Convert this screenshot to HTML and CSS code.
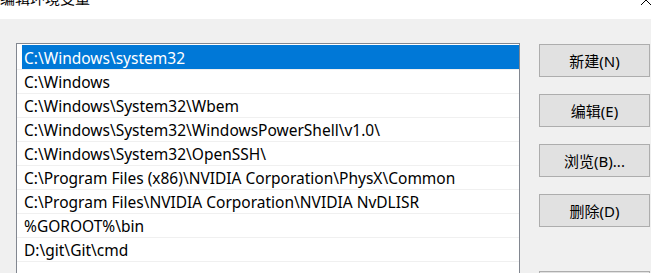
FILE: index.html
```html
<!DOCTYPE html>
<html lang="zh-CN">
  <head>
    <meta charset="UTF-8" />
    <meta name="viewport" content="width=device-width, initial-scale=1.0" />
    <title>编辑环境变量</title>
    <link rel="stylesheet" href="styles.css">
  </head>
  <body>
    <div class="titlebar">
      <span class="title">编辑环境变量</span>
      <svg class="close-icon" width="12" height="12" viewBox="0 0 12 12">
        <path d="M1 1 L11 11 M11 1 L1 11" stroke="#000" stroke-width="1" fill="none" />
      </svg>
    </div>

    <div class="dialog">
      <div class="path-list">
        <div class="row selected"><span>C:\Windows\system32</span></div>
        <div class="row"><span>C:\Windows</span></div>
        <div class="row"><span>C:\Windows\System32\Wbem</span></div>
        <div class="row"><span>C:\Windows\System32\WindowsPowerShell\v1.0\</span></div>
        <div class="row"><span>C:\Windows\System32\OpenSSH\</span></div>
        <div class="row"><span>C:\Program Files (x86)\NVIDIA Corporation\PhysX\Common</span></div>
        <div class="row"><span>C:\Program Files\NVIDIA Corporation\NVIDIA NvDLISR</span></div>
        <div class="row"><span>%GOROOT%\bin</span></div>
        <div class="row"><span>D:\git\Git\cmd</span></div>
        <div class="row"><span></span></div>
      </div>

      <div class="button-column">
        <button type="button" class="btn">新建(N)</button>
        <button type="button" class="btn">编辑(E)</button>
        <button type="button" class="btn">浏览(B)...</button>
        <button type="button" class="btn">删除(D)</button>
        <button type="button" class="btn group-start">上移(U)</button>
      </div>
    </div>
  </body>
</html>
```

FILE: styles.css
```css
html,
body {
  margin: 0;
  padding: 0;
}
body {
  width: 651px;
  height: 273px;
  overflow: hidden;
  background: #f0f0f0;
  font-family: "Noto Sans", "Noto Sans CJK SC", sans-serif;
  color: #000;
}
.titlebar {
  height: 19px;
  background: #fff;
  display: flex;
  justify-content: space-between;
  align-items: flex-start;
  overflow: hidden;
}
.title {
  font-family: "Noto Sans CJK SC", sans-serif;
  font-size: 15px;
  line-height: 20px;
  margin-top: -12px;
}
.close-icon {
  margin-top: -6px;
  margin-right: -1px;
}
.dialog {
  display: flex;
  align-items: flex-start;
  padding: 24px 0 0 16px;
}
.path-list {
  width: 502px;
  height: 300px;
  background: #fff;
  border: 1px solid #828790;
  padding-top: 2px;
  flex-shrink: 0;
}
.row {
  height: 23px;
  border-bottom: 1px solid #f0f0f0;
  display: flex;
}
.row span {
  flex: 1;
  margin-left: 5px;
  padding-left: 2px;
  font-size: 15.5px;
  line-height: 24px;
  white-space: nowrap;
}
.row.selected span {
  background: #0078d7;
  color: #fff;
  height: 24px;
  margin-top: -1px;
  line-height: 26px;
}
.button-column {
  display: flex;
  flex-direction: column;
  gap: 17px;
  margin-left: 19px;
  padding-top: 1px;
}
.btn {
  width: 111px;
  height: 33px;
  background: #e1e1e1;
  border: 1px solid #adadad;
  border-radius: 0;
  font-family: "Noto Sans", "Noto Sans CJK SC", sans-serif;
  font-size: 15px;
  color: #000;
  padding: 0;
}
.btn.group-start {
  margin-top: 27px;
}
```
